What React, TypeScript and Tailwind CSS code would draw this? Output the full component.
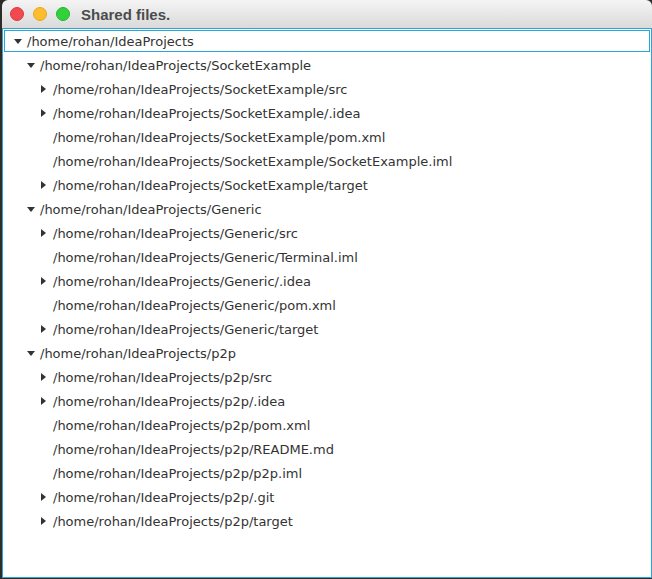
import React from 'react';

type Row = { level: number; label: string; arrow?: 'down' | 'right'; selected?: boolean };

const base = '/home/rohan/IdeaProjects';

const rows: Row[] = [
    { level: 0, label: base, arrow: 'down', selected: true },
    { level: 1, label: `${base}/SocketExample`, arrow: 'down' },
    { level: 2, label: `${base}/SocketExample/src`, arrow: 'right' },
    { level: 2, label: `${base}/SocketExample/.idea`, arrow: 'right' },
    { level: 2, label: `${base}/SocketExample/pom.xml` },
    { level: 2, label: `${base}/SocketExample/SocketExample.iml` },
    { level: 2, label: `${base}/SocketExample/target`, arrow: 'right' },
    { level: 1, label: `${base}/Generic`, arrow: 'down' },
    { level: 2, label: `${base}/Generic/src`, arrow: 'right' },
    { level: 2, label: `${base}/Generic/Terminal.iml` },
    { level: 2, label: `${base}/Generic/.idea`, arrow: 'right' },
    { level: 2, label: `${base}/Generic/pom.xml` },
    { level: 2, label: `${base}/Generic/target`, arrow: 'right' },
    { level: 1, label: `${base}/p2p`, arrow: 'down' },
    { level: 2, label: `${base}/p2p/src`, arrow: 'right' },
    { level: 2, label: `${base}/p2p/.idea`, arrow: 'right' },
    { level: 2, label: `${base}/p2p/pom.xml` },
    { level: 2, label: `${base}/p2p/README.md` },
    { level: 2, label: `${base}/p2p/p2p.iml` },
    { level: 2, label: `${base}/p2p/.git`, arrow: 'right' },
    { level: 2, label: `${base}/p2p/target`, arrow: 'right' },
];

// indent per tree level (padding-left inside the row box)
const indent = ['pl-[9px]', 'pl-[22px]', 'pl-[35px]'];

const Arrow: React.FC<{ dir?: 'down' | 'right' }> = ({ dir }) => (
    <span className="w-[13px] h-full shrink-0 flex items-center">
        {dir === 'down' && (
            <svg width="8" height="5" viewBox="0 0 8 5">
                <path d="M0 0 H8 L4 5 Z" fill="#333333" />
            </svg>
        )}
        {dir === 'right' && (
            <svg width="5" height="8" viewBox="0 0 5 8" className="ml-[1px]">
                <path d="M0 0 L5 4 L0 8 Z" fill="#333333" />
            </svg>
        )}
    </span>
);

export default function App() {
    return (
        <div className="w-[652px] h-[579px] bg-[#2d2c28] pl-[2px] pb-[1px] flex flex-col">
            <div className="flex-1 flex flex-col rounded-t-[6px] overflow-hidden">
                {/* Title bar */}
                <div className="h-[28px] shrink-0 flex items-center bg-gradient-to-b from-[#f4f4f4] to-[#dadada] pl-[8px]">
                    <div className="flex items-center gap-[9px]">
                        <span className="w-[14px] h-[14px] rounded-full bg-[#f2484f] border border-[#dd3a41]" />
                        <span className="w-[14px] h-[14px] rounded-full bg-[#fdbd2e] border border-[#e5a620]" />
                        <span className="w-[14px] h-[14px] rounded-full bg-[#31d13c] border border-[#22b52c]" />
                    </div>
                    <div className="ml-[11px] text-[15px] font-bold text-[#4c4c4c] font-['Liberation_Sans',sans-serif] leading-none">
                        Shared files.
                    </div>
                </div>

                {/* Tree */}
                <div className="flex-1 bg-white border border-[#2aa5d6] font-['DejaVu_Sans',sans-serif] text-[13px] text-[#333333]">
                    {rows.map((r, i) => (
                        <div key={i} className="h-[24px] flex">
                            <div
                                className={`flex-1 flex items-center m-[1px] border ${indent[r.level]} ${r.selected ? 'border-[#2aa5d6]' : 'border-transparent'}`}
                            >
                                <Arrow dir={r.arrow} />
                                <span className="whitespace-nowrap leading-none">{r.label}</span>
                            </div>
                        </div>
                    ))}
                </div>
            </div>
        </div>
    );
}
